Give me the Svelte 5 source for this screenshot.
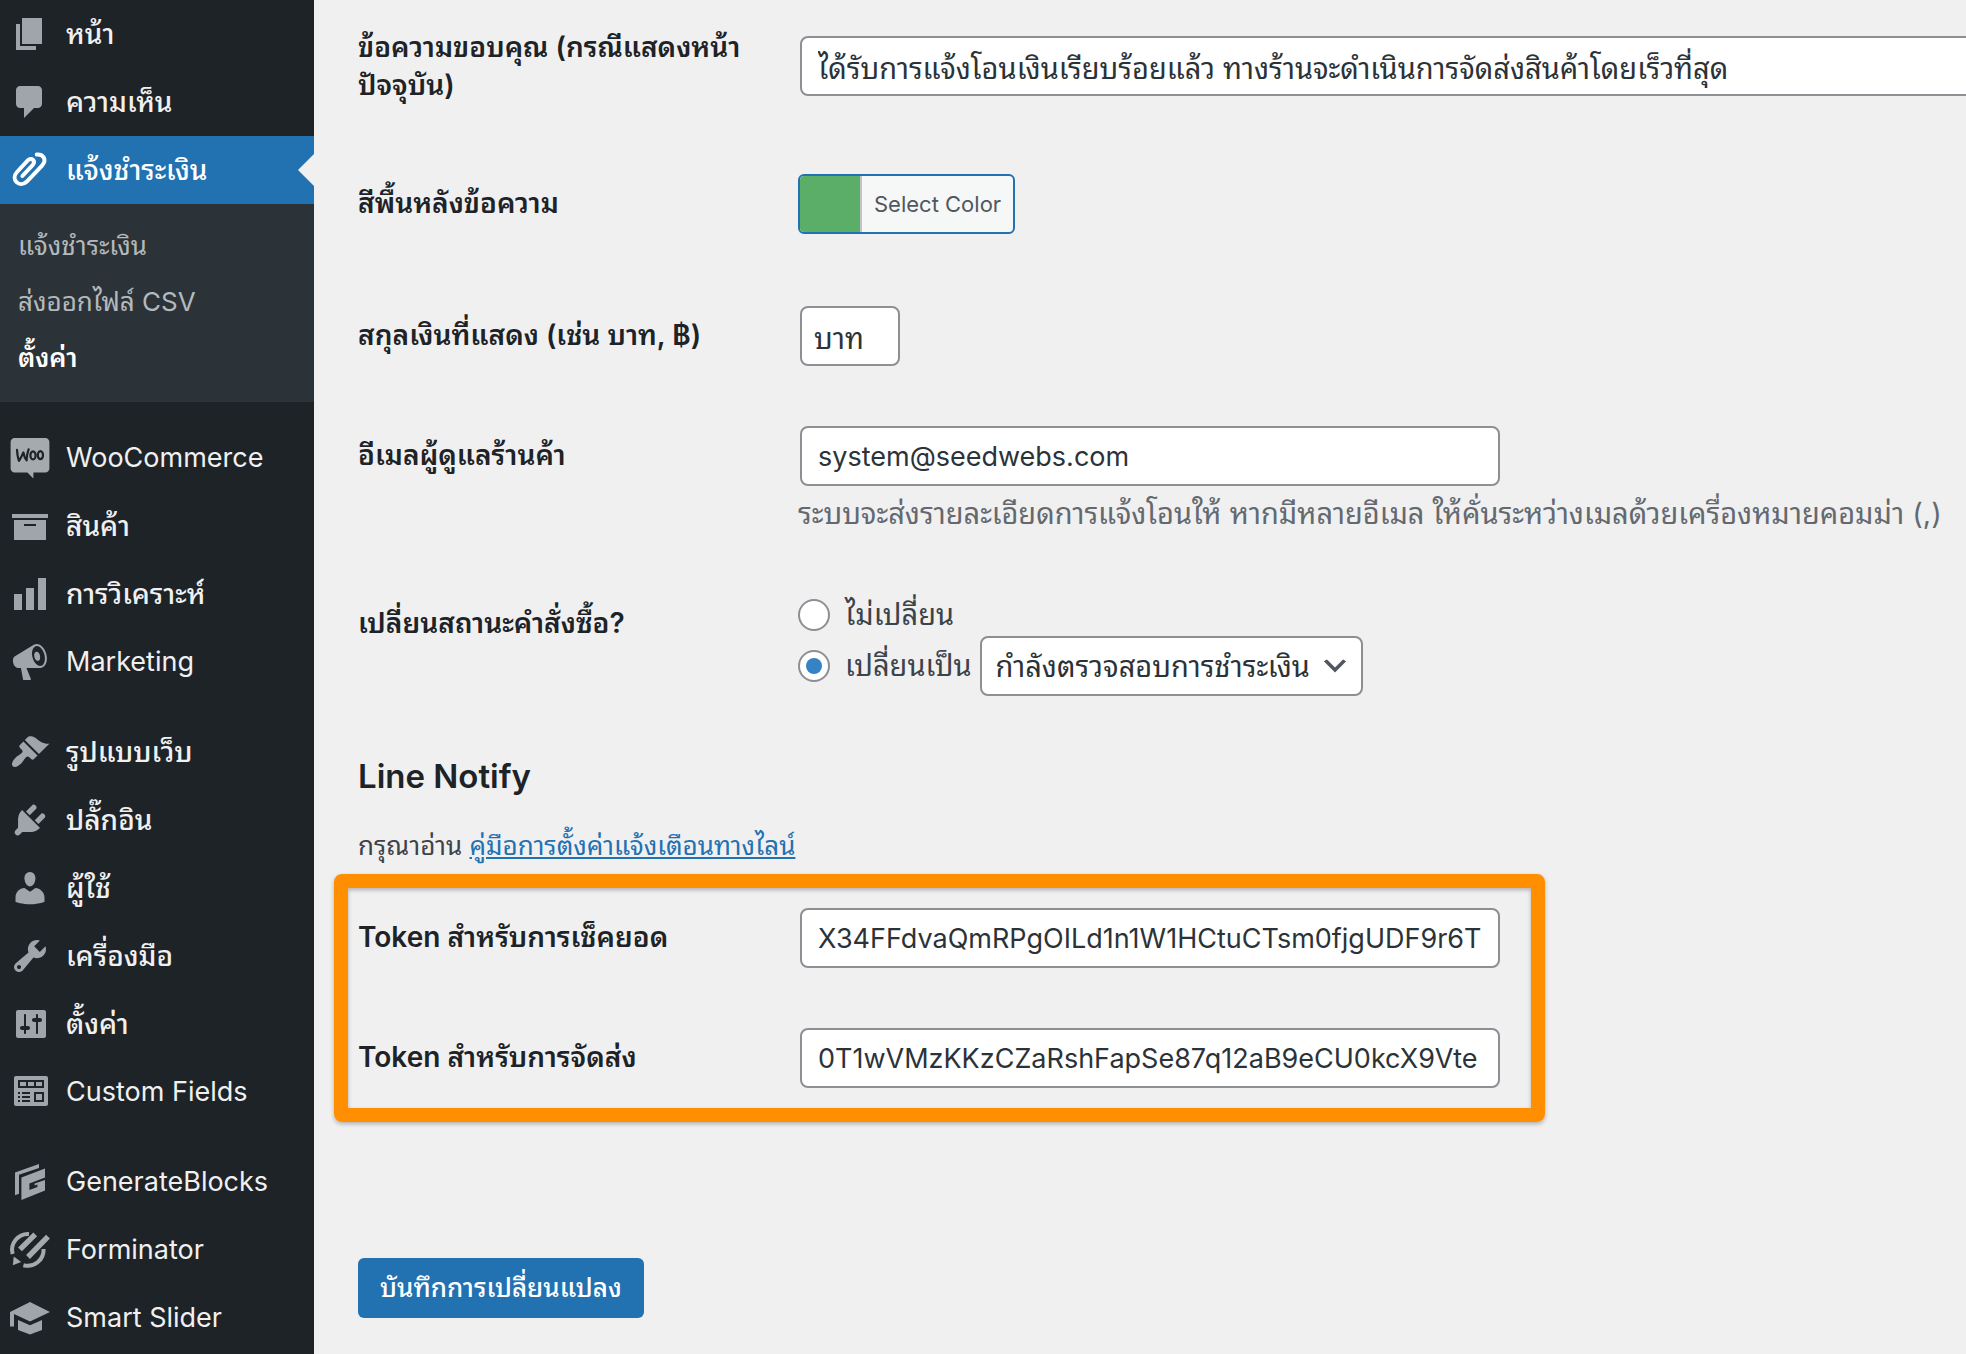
<script lang="ts">
  interface MenuItem {
    label: string;
    icon: string;
    path: string;
    href: string;
  }

  const contentMenu: MenuItem[] = [
    { label: "หน้า", icon: "page", href: "#pages", path: "M6 15V2h10v13H6zm-1 1h8v2H3V5h2v11z" },
    { label: "ความเห็น", icon: "comments", href: "#comments", path: "M5 2h9c1.1 0 2 .9 2 2v7c0 1.1-.9 2-2 2h-2l-5 5v-5H5c-1.1 0-2-.9-2-2V4c0-1.1.9-2 2-2z" },
  ];

  const shopMenu: MenuItem[] = [
    { label: "WooCommerce", icon: "woo", href: "#woocommerce", path: "" },
    { label: "สินค้า", icon: "archive", href: "#products", path: "M19 4v2H1V4h18zM2 7h16v10H2V7zm11 3V9H7v1h6z" },
    { label: "การวิเคราะห์", icon: "chart", href: "#analytics", path: "M18 18V2h-4v16h4zm-6 0V7H8v11h4zm-6 0v-8H2v8h4z" },
    { label: "Marketing", icon: "megaphone", href: "#marketing", path: "M18.15 5.94c.46 1.62.38 3.22-.02 4.48-.42 1.28-1.26 2.18-2.3 2.48-.16.06-.26.06-.4.06-.06.02-.12.02-.18.02-.06.02-.14.02-.22.02h-6.8l2.22 5.5c.02.14-.06.26-.14.34-.08.1-.24.16-.34.16H6.95c-.1 0-.26-.06-.34-.16-.08-.08-.16-.2-.14-.34l-1-5.5H4.25l-.02-.02c-.5.06-1.08-.18-1.54-.62s-.88-1.08-1.06-1.88c-.24-.8-.2-1.56-.02-2.2.18-.62.58-1.08 1.06-1.3l.02-.02 9-5.4c.1-.06.18-.1.24-.16.06-.04.14-.08.24-.12.16-.08.28-.12.5-.18 1.04-.3 2.24.1 3.22.98s1.84 2.24 2.26 3.86zm-2.58 5.98h-.02c.4-.1.74-.34 1.04-.7.58-.7.86-1.76.86-3.04 0-.64-.1-1.3-.28-1.98-.34-1.36-1.02-2.5-1.78-3.24s-1.68-1.1-2.46-.88c-.82.22-1.4.96-1.7 2-.32 1.04-.28 2.36.06 3.72.38 1.36 1 2.5 1.8 3.24.78.74 1.62 1.1 2.48.88zm-2.54-7.08c.22-.04.42-.02.62.04.38.16.76.48 1.02 1s.42 1.2.42 1.78c0 .3-.04.56-.12.8-.18.48-.44.84-.86.94-.34.1-.8-.06-1.14-.4s-.64-.86-.78-1.5c-.18-.62-.12-1.24.02-1.72s.48-.84.82-.94z" },
  ];

  const siteMenu: MenuItem[] = [
    { label: "รูปแบบเว็บ", icon: "appearance", href: "#appearance", path: "M14.48 11.06L7.41 3.99l1.5-1.5c.5-.56 2.3-.47 3.51.32 1.21.8 1.43 1.28 2.91 2.1 1.18.64 2.45 1.26 4.45.85zm-.71.71L6.7 4.7 4.93 6.47c-.39.39-.39 1.02 0 1.41l1.06 1.06c.39.39.39 1.03 0 1.42-.6.6-1.43 1.11-2.21 1.69-.35.26-.7.53-1.01.84C1.43 14.23.4 16.08 1.4 17.07c.99 1 2.84-.03 4.18-1.36.31-.31.58-.66.85-1.02.57-.78 1.08-1.61 1.69-2.21.39-.39 1.02-.39 1.41 0l1.06 1.06c.39.39 1.02.39 1.41 0z" },
    { label: "ปลั๊กอิน", icon: "plugins", href: "#plugins", path: "M13.11 4.36L9.87 7.6 8 5.73l3.24-3.24c.35-.34 1.05-.2 1.56.32.52.51.66 1.21.31 1.55zm-8 1.77l.91-1.12 9.01 9.01-1.19.84c-.71.71-2.63 1.16-3.82 1.16H6.14L4.9 17.26c-.59.59-1.54.59-2.12 0-.59-.58-.59-1.53 0-2.12l1.24-1.24v-3.88c0-1.13.4-3.19 1.09-3.89zm7.26 3.97l3.24-3.24c.34-.35 1.04-.21 1.55.31.52.51.66 1.21.31 1.55l-3.24 3.25z" },
    { label: "ผู้ใช้", icon: "users", href: "#users", path: "M10 9.25c-2.27 0-2.73-3.44-2.73-3.44C7 4.02 7.82 2 9.97 2c2.16 0 2.98 2.02 2.71 3.81 0 0-.41 3.44-2.68 3.44zm0 2.57L12.72 10c2.39 0 4.52 2.33 4.52 4.53v2.49s-3.65 1.13-7.24 1.13c-3.65 0-7.24-1.13-7.24-1.13v-2.49c0-2.25 1.94-4.48 4.47-4.48z" },
    { label: "เครื่องมือ", icon: "tools", href: "#tools", path: "M16.68 9.77c-1.34 1.34-3.3 1.67-4.95.99l-5.41 6.52c-.99.99-2.59.99-3.58 0s-.99-2.59 0-3.57l6.52-5.42c-.68-1.65-.35-3.61.99-4.95 1.28-1.28 3.12-1.62 4.72-1.06l-2.89 2.89 2.82 2.82 2.86-2.87c.53 1.58.18 3.39-1.08 4.65zM3.81 16.21c.4.39 1.04.39 1.43 0 .4-.4.4-1.04 0-1.43-.39-.4-1.03-.4-1.43 0-.39.39-.39 1.03 0 1.43z" },
    { label: "ตั้งค่า", icon: "settings", href: "#settings", path: "M18 16V4c0-.55-.45-1-1-1H4c-.55 0-1 .45-1 1v12c0 .55.45 1 1 1h13c.55 0 1-.45 1-1zM8 11h1c.55 0 1 .45 1 1s-.45 1-1 1H8v1.5c0 .28-.22.5-.5.5s-.5-.22-.5-.5V13H6c-.55 0-1-.45-1-1s.45-1 1-1h1V5.5c0-.28.22-.5.5-.5s.5.22.5.5V11zm5-2h-1c-.55 0-1-.45-1-1s.45-1 1-1h1V5.5c0-.28.22-.5.5-.5s.5.22.5.5V7h1c.55 0 1 .45 1 1s-.45 1-1 1h-1v5.5c0 .28-.22.5-.5.5s-.5-.22-.5-.5V9z" },
    { label: "Custom Fields", icon: "fields", href: "#fields", path: "M3 2h15c.6 0 1 .4 1 1v13c0 .6-.4 1-1 1H3c-.6 0-1-.4-1-1V3c0-.6.4-1 1-1zM4 4v4h13V4zM5 5h3v2H5zM9 5h3v2H9zM13 5h3v2h-3zM4 10v1h1v-1zM6 10v1h4v-1zM4 12v1h1v-1zM6 12v1h4v-1zM4 14v1h1v-1zM6 14v1h4v-1zM12 10v5h5v-5zM13 11h3v3h-3z" },
  ];

  const pluginMenu: MenuItem[] = [
    { label: "GenerateBlocks", icon: "blocks", href: "#blocks", path: "M2.5 5.2l12-4.2v2l-10 3.4v9.5l-2 .7zM5.7 7.7l11.8-4.4v4.4l-7.8 3v3.3l4-1.5v-1.3l-1.4.5v-1l5.2-1.7v5.3L5.7 19z" },
    { label: "Forminator", icon: "forminator", href: "#forminator", path: "" },
    { label: "Smart Slider", icon: "slider", href: "#slider", path: "M10 2l10 5-10 4.8L2 8v6.3H0V7zM4 11l6 2.6 6-2.6v5l-6 2.2L4 16z" },
  ];

  const isThai = (text: string) => /[\u0e00-\u0e7f]/.test(text);

  let message = $state("ได้รับการแจ้งโอนเงินเรียบร้อยแล้ว ทางร้านจะดำเนินการจัดส่งสินค้าโดยเร็วที่สุด");
  let currency = $state("บาท");
  let email = $state("system@seedwebs.com");
  let changeStatus = $state("yes");
  let orderStatus = $state("checking");
  let checkToken = $state("X34FFdvaQmRPgOILd1n1W1HCtuCTsm0fjgUDF9r6T");
  let shippingToken = $state("0T1wVMzKKzCZaRshFapSe87q12aB9eCU0kcX9Vte");
</script>

{#snippet menuLink(item: MenuItem)}
  <li>
    <a class="menu-link" class:thai={isThai(item.label)} href={item.href}>
      {#if item.icon === "woo"}
        <svg class="icon warm" viewBox="0 0 20 20" aria-hidden="true">
          <path d="M2.3 0h15.400c1.100 0 2 .9 2 2v13.300c0 1.100-.9 2-2 2h-6v2.900l-3-2.900H2.300c-1.100 0-2-.9-2-2V2c0-1.100.9-2 2-2z" />
          <path class="cutout" d="M3.500 5.900c.1 2 .5 4.300 1 5.500.9-1.300 1.600-2.700 2.200-4.200.3 1.700.9 3.200 1.600 4 .1-2.200.5-4.200 1-5.500" />
          <ellipse class="cutout" cx="11.500" cy="8.700" rx="1.300" ry="2" />
          <ellipse class="cutout" cx="15.200" cy="8.600" rx="1.300" ry="2" />
        </svg>
      {:else if item.icon === "forminator"}
        <svg class="icon warm" viewBox="0 0 20 20" aria-hidden="true">
          <path class="ring" d="M1.300 12A8 8 0 0 1 9.500 2M16.800 9.500A8 8 0 0 1 6.700 17.600" />
          <path class="bar" d="M5 9.700l7.600-7.500M9 13.500l10-10.200" />
          <path d="M1.900 13.300l3.700 2.700-4.200 1.600z" />
        </svg>
      {:else}
        <svg class="icon" viewBox="0 0 20 20" aria-hidden="true">
          <path d={item.path} fill-rule="evenodd" />
        </svg>
      {/if}
      <span>{item.label}</span>
    </a>
  </li>
{/snippet}

<div class="admin">
  <nav class="sidebar" aria-label="เมนูหลัก">
    <ul>
      {#each contentMenu as item (item.href)}
        {@render menuLink(item)}
      {/each}
      <li>
        <a class="menu-link thai active" href="#payment" aria-current="true">
          <svg class="icon" viewBox="0 0 20 20" aria-hidden="true">
            <path class="clip" d="M6.200 13l5.200-5.600c1.600-1.900-.7-4-2.400-2.300L3.500 11c-3.400 3.700 1.200 8.200 4.800 4.900l7.600-8c2.800-3 .8-5.800-2.500-5.600" />
          </svg>
          <span>แจ้งชำระเงิน</span>
        </a>
        <ul class="submenu">
          <li><a href="#payment">แจ้งชำระเงิน</a></li>
          <li><a href="#export">ส่งออกไฟล์ CSV</a></li>
          <li><a class="current" href="#payment-settings" aria-current="page">ตั้งค่า</a></li>
        </ul>
      </li>
    </ul>
    {#each [shopMenu, siteMenu, pluginMenu] as group}
      <ul>
        {#each group as item (item.href)}
          {@render menuLink(item)}
        {/each}
      </ul>
    {/each}
  </nav>

  <main class="content">
    <form onsubmit={(event) => event.preventDefault()}>
      <div class="row middle">
        <label class="title" for="message">ข้อความขอบคุณ (กรณีแสดงหน้าปัจจุบัน)</label>
        <div class="field"><input class="text thai wide" id="message" type="text" bind:value={message} /></div>
      </div>
      <div class="row">
        <span class="title" id="color-label">สีพื้นหลังข้อความ</span>
        <div class="field color-field">
          <button class="color-button" type="button" aria-describedby="color-label">
            <span class="swatch"></span>
            <span class="color-text">Select Color</span>
          </button>
        </div>
      </div>
      <div class="row">
        <label class="title" for="currency">สกุลเงินที่แสดง (เช่น บาท, ฿)</label>
        <div class="field"><input class="text thai small" id="currency" type="text" bind:value={currency} /></div>
      </div>
      <div class="row">
        <label class="title" for="email">อีเมลผู้ดูแลร้านค้า</label>
        <div class="field">
          <input class="text" id="email" type="email" bind:value={email} />
          <p class="description">ระบบจะส่งรายละเอียดการแจ้งโอนให้ หากมีหลายอีเมล ให้คั่นระหว่างเมลด้วยเครื่องหมายคอมม่า (,)</p>
        </div>
      </div>
      <div class="row" role="radiogroup" aria-labelledby="status-label">
        <span class="title" id="status-label">เปลี่ยนสถานะคำสั่งซื้อ?</span>
        <div class="field">
          <div class="choice">
            <input id="status-no" type="radio" name="status" value="no" bind:group={changeStatus} />
            <label for="status-no">ไม่เปลี่ยน</label>
          </div>
          <div class="choice">
            <input id="status-yes" type="radio" name="status" value="yes" bind:group={changeStatus} />
            <label for="status-yes">เปลี่ยนเป็น</label>
            <select aria-label="สถานะคำสั่งซื้อ" bind:value={orderStatus}>
              <option value="checking">กำลังตรวจสอบการชำระเงิน</option>
            </select>
          </div>
        </div>
      </div>

      <h2>Line Notify</h2>
      <p class="intro">กรุณาอ่าน <a href="#line-guide">คู่มือการตั้งค่าแจ้งเตือนทางไลน์</a></p>

      <section class="highlight">
        <div class="row">
          <label class="title" for="check-token">Token สำหรับการเช็คยอด</label>
          <div class="field"><input class="text" id="check-token" type="text" bind:value={checkToken} /></div>
        </div>
        <div class="row">
          <label class="title" for="shipping-token">Token สำหรับการจัดส่ง</label>
          <div class="field"><input class="text" id="shipping-token" type="text" bind:value={shippingToken} /></div>
        </div>
      </section>

      <button class="submit" type="submit">บันทึกการเปลี่ยนแปลง</button>
    </form>
  </main>
</div>

<style>
  :global(body) {
    margin: 0;
    background: #f0f0f1;
  }

  .admin {
    display: grid;
    grid-template-columns: 314px minmax(0, 1fr);
    min-height: 100vh;
    font-family: Inter, Thonburi, "Noto Sans Thai Looped", Loma, Garuda, "Noto Sans Thai", "Noto Sans", sans-serif;
    font-size: 26px;
    color: #3c434a;
    background: #f0f0f1;
  }

  .admin * {
    box-sizing: border-box;
  }

  .sidebar {
    display: flex;
    flex-direction: column;
    gap: 22px;
    background: #1d2327;
  }

  ul {
    list-style: none;
    margin: 0;
    padding: 0;
  }

  .menu-link {
    display: flex;
    align-items: center;
    gap: 16px;
    height: 68px;
    padding-left: 10px;
    color: #f0f0f1;
    font-size: 27px;
    line-height: 38px;
    text-decoration: none;
    white-space: nowrap;
  }

  .menu-link.thai {
    font-size: 28px;
    font-weight: 500;
  }

  .menu-link.active {
    position: relative;
    background: #2271b1;
    color: #fff;
  }

  .menu-link.active::after {
    content: "";
    position: absolute;
    right: 0;
    top: 18px;
    border: 16px solid transparent;
    border-left-width: 0;
    border-right-color: #f0f0f1;
  }

  .icon {
    flex: none;
    width: 40px;
    height: 40px;
    fill: #a0a5ab;
    overflow: visible;
  }

  .icon.warm {
    fill: #a5aaad;
  }

  .cutout {
    fill: none;
    stroke: #1d2327;
    stroke-width: 1.1;
    stroke-linecap: round;
    stroke-linejoin: round;
  }

  .ring,
  .bar {
    fill: none;
    stroke: #a5aaad;
    stroke-width: 2;
  }

  .bar {
    stroke-width: 2.7;
  }

  .clip {
    fill: none;
    stroke: #fff;
    stroke-width: 2;
    stroke-linecap: round;
  }

  .submenu {
    padding: 14px 0 16px;
    background: #2c3338;
  }

  .submenu a {
    display: block;
    padding: 10px 18px;
    color: #b4b9be;
    font-size: 26px;
    line-height: 36px;
    text-decoration: none;
  }

  .submenu .current {
    color: #fff;
    font-weight: 600;
  }

  .content {
    padding-left: 44px;
    overflow: hidden;
  }

  form {
    margin-top: -12px;
  }

  .row {
    display: grid;
    grid-template-columns: 400px minmax(0, 1fr);
    column-gap: 40px;
  }

  .row.middle {
    align-items: center;
  }

  .title {
    padding: 40px 0;
    color: #1d2327;
    font-size: 28px;
    font-weight: 600;
    line-height: 38px;
  }

  .field {
    padding: 30px 0;
  }

  .text,
  select {
    display: block;
    height: 60px;
    margin: 0 2px;
    border: 2px solid #8c8f94;
    border-radius: 8px;
    background: #fff;
    color: #2c3338;
    font-family: inherit;
    font-size: 27px;
  }

  .text {
    width: 700px;
    max-width: 100%;
    padding: 0 16px;
  }

  .text.thai,
  select {
    font-size: 29px;
  }

  .text.wide {
    width: calc(100% + 20px);
    max-width: none;
  }

  .text.small {
    width: 100px;
    padding: 0 12px;
  }

  .color-field {
    padding-bottom: 42px;
  }

  .color-button {
    display: flex;
    height: 60px;
    padding: 0;
    border: 2px solid #2271b1;
    border-radius: 6px;
    background: #f6f7f7;
    overflow: hidden;
    font-family: inherit;
  }

  .swatch {
    width: 60px;
    height: 56px;
    background: #5aae67;
  }

  .color-text {
    padding: 0 12px;
    border-left: 2px solid #c3c4c7;
    color: #50575e;
    font-size: 22px;
    line-height: 56px;
  }

  .description {
    margin: 8px 0 0;
    color: #646970;
    font-size: 29px;
    line-height: 40px;
    white-space: nowrap;
  }

  .choice {
    display: flex;
    align-items: center;
    min-height: 42px;
    font-size: 29px;
    line-height: 42px;
  }

  .choice input {
    appearance: none;
    flex: none;
    display: grid;
    place-content: center;
    width: 32px;
    height: 32px;
    margin: 0 15px 0 0;
    border: 2px solid #8c8f94;
    border-radius: 50%;
    background: #fff;
  }

  .choice input:checked::before {
    content: "";
    width: 16px;
    height: 16px;
    border-radius: 50%;
    background: #3582c4;
  }

  select {
    appearance: none;
    margin: 0 0 0 8px;
    padding: 0 50px 0 14px;
    background: #fff url("data:image/svg+xml,%3Csvg xmlns='http://www.w3.org/2000/svg' viewBox='0 0 20 20'%3E%3Cpath d='M5 6l5 5 5-5 2 1-7 7-7-7 2-1z' fill='%2350575e'/%3E%3C/svg%3E") no-repeat right 10px center / 32px 32px;
  }

  h2 {
    margin: 26px 0;
    color: #1d2327;
    font-size: 33px;
    font-weight: 600;
    line-height: 48px;
  }

  .intro {
    margin: 0 0 8px;
    line-height: 40px;
  }

  .intro a {
    color: #2271b1;
  }

  .highlight {
    display: grid;
    gap: 60px;
    width: 1211px;
    max-width: 100%;
    margin-left: -24px;
    padding: 20px 10px;
    border: 14px solid #ff8f00;
    border-radius: 8px;
    box-shadow: 0 2px 4px #0004, inset 0 2px 4px #0004;
  }

  .highlight .field {
    padding: 0;
  }

  .highlight .title {
    padding: 10px 0;
  }

  .submit {
    height: 60px;
    margin: 136px 0 36px;
    padding: 0 22px;
    border: 0;
    border-radius: 6px;
    background: #2271b1;
    color: #fff;
    font-family: inherit;
    font-size: 26px;
    font-weight: 500;
    line-height: 36px;
  }
</style>
